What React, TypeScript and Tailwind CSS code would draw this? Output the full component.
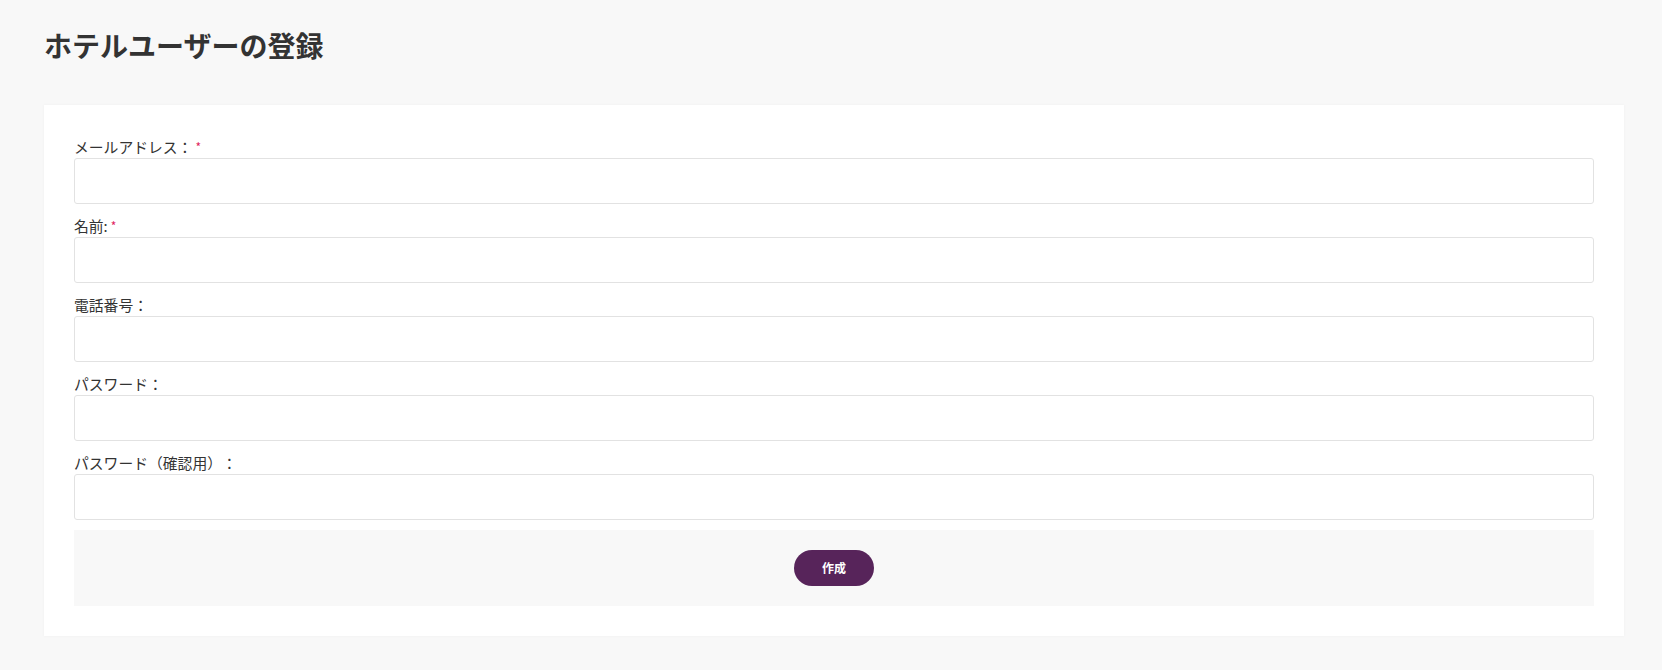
import { useState } from 'react';

const fields = [
	{ label: 'メールアドレス：', required: true, type: 'email' },
	{ label: '名前:', required: true, type: 'text' },
	{ label: '電話番号：', required: false, type: 'tel' },
	{ label: 'パスワード：', required: false, type: 'password' },
	{ label: 'パスワード（確認用）：', required: false, type: 'password' },
];

export default function App() {
	const [values, setValues] = useState<string[]>(fields.map(() => ''));

	return (
		<div
			className="min-h-[670px] w-full bg-[#f8f8f8] pl-[44px] pr-[38px] pt-[28px] text-[#333] [text-spacing-trim:space-all]"
			style={{ fontFamily: '"Noto Sans CJK JP", "Noto Sans", sans-serif' }}
		>
			<h1 className="text-[28px] font-bold leading-[34px]">ホテルユーザーの登録</h1>
			<div className="mt-[43px] bg-white px-[30px] pt-[30px] pb-[30px] shadow-[0_0_3px_rgba(0,0,0,0.04)]">
				{fields.map((f, i) => (
					<div key={f.label} className="mb-[10px]">
						<label className="block h-[23px] text-[14.8px] leading-[23px]">
							{f.label}
							{f.required && (
								<span className="relative -top-[1px] ml-[3px] text-[12px] text-[#e0245e]">*</span>
							)}
						</label>
						<input
							type={f.type}
							value={values[i]}
							onChange={(e) => {
								const next = [...values];
								next[i] = e.target.value;
								setValues(next);
							}}
							className="block h-[46px] w-full rounded-[3px] border border-[#e2e2e2] px-3 text-[14px] outline-none"
						/>
					</div>
				))}
				<div className="flex h-[76px] items-center justify-center bg-[#f8f8f8]">
					<button className="h-[36px] w-[80px] rounded-full bg-[#57245a] text-[12px] font-bold text-white">
						作成
					</button>
				</div>
			</div>
		</div>
	);
}
